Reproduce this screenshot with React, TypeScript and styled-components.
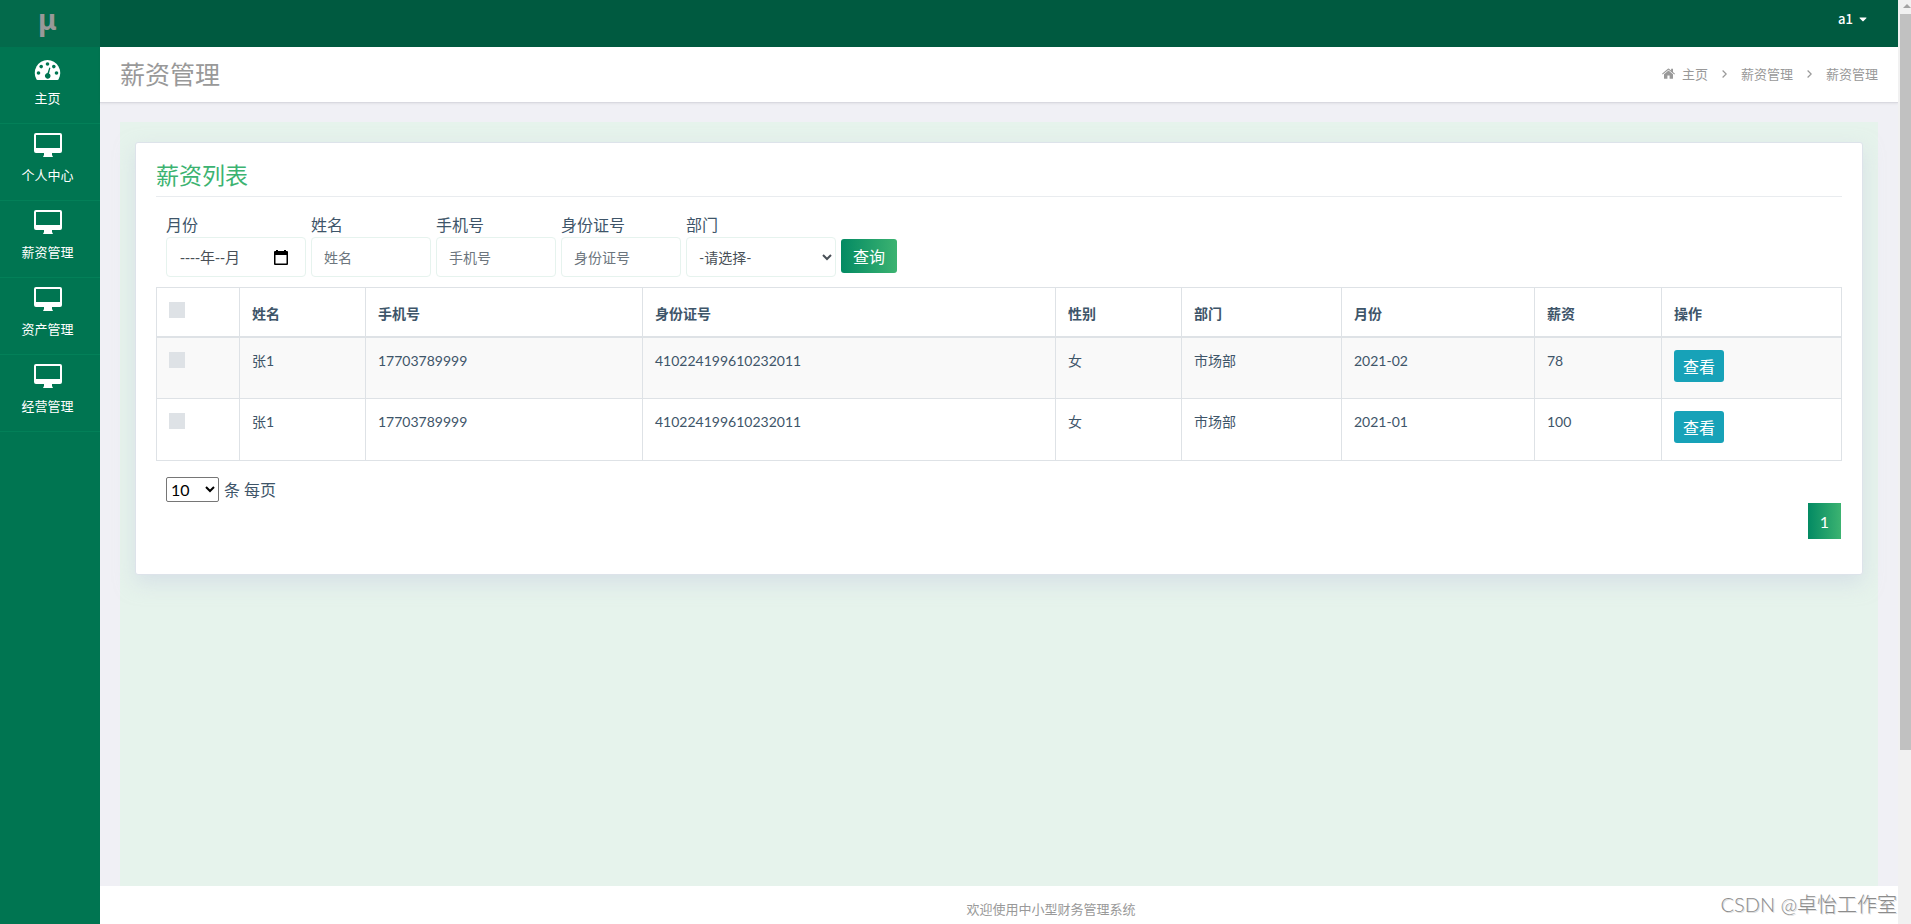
import React from "react";
import styled, { createGlobalStyle } from "styled-components";
import { FaCaretDown } from "react-icons/fa";

const sans = `Lato, "Noto Sans CJK SC", sans-serif`;

const GlobalStyle = createGlobalStyle`
  *, *::before, *::after { box-sizing: border-box; }
  html, body, #root { height: 100%; }
  body {
    margin: 0;
    overflow: hidden;
    background: #f0f0f5;
    color: #3e5569;
    font: 14px/21px ${sans};
  }
  button, input, select { font-family: inherit; }
  a { color: inherit; text-decoration: none; }
`;

const Shell = styled.div`
  display: flex;
  height: 100vh;
`;

const Sidebar = styled.nav`
  flex: 0 0 100px;
  background: #007551;
  color: #fff;
`;

const Brand = styled.a`
  display: block;
  height: 47px;
  padding: 0 5px 0 0;
  background: #036a4b;
  color: #999;
  font: bold 28px/38px "Noto Sans", sans-serif;
  text-align: center;
`;

const NavItem = styled.a`
  display: flex;
  flex-direction: column;
  align-items: center;
  justify-content: space-between;
  height: 77px;
  padding: 9px 5px 15px 0;
  border-bottom: 1px solid #038058;
  font-size: 13px;
  line-height: 20px;
`;

const Main = styled.div`
  flex: 1;
  min-width: 0;
  display: flex;
  flex-direction: column;
`;

const TopBar = styled.header`
  flex: 0 0 47px;
  display: flex;
  justify-content: flex-end;
  align-items: flex-start;
  padding: 9px 29px;
  background: #005a40;
`;

const UserButton = styled.button`
  display: flex;
  align-items: center;
  gap: 4px;
  padding: 0;
  border: 0;
  background: none;
  color: #fff;
  font: 500 13px/20px "Noto Sans CJK SC", sans-serif;
`;

const PageHeader = styled.div`
  flex: 0 0 56px;
  display: flex;
  align-items: center;
  justify-content: space-between;
  padding: 0 20px 2px;
  background: #fff;
  border-bottom: 1px solid #d9d9e0;
  box-shadow: 0 1px 2px rgba(0, 0, 0, 0.06);
  color: #999;
`;

const PageTitle = styled.h1`
  margin: 0;
  font-size: 25px;
  font-weight: normal;
  line-height: 36px;
`;

const Crumbs = styled.nav`
  display: flex;
  align-items: center;
  gap: 14px;
  font-size: 13px;
  line-height: 20px;

  a {
    display: flex;
    align-items: center;
    gap: 7px;
  }
`;

const Content = styled.main`
  flex: 1;
  min-height: 0;
  padding: 19px 20px 0;
`;

const Canvas = styled.div`
  height: 100%;
  padding: 20px 15px 0;
  background: #e6f3ec;
`;

const Card = styled.section`
  padding: 16px 20px 35px;
  border: 1px solid #dde3ea;
  border-radius: 3px;
  background: #fff;
  box-shadow: 0 8px 20px rgba(200, 208, 225, 0.5);
`;

const CardTitle = styled.h2`
  margin: 0 0 16px;
  padding-bottom: 4px;
  border-bottom: 1px solid #e9ecef;
  color: #3cb371;
  font-size: 23px;
  font-weight: normal;
  line-height: 33px;
`;

const SearchForm = styled.form`
  display: flex;
  align-items: flex-start;
  gap: 5px;
  height: 74px;
  padding-left: 10px;
`;

const Field = styled.label<{ $width: number }>`
  display: flex;
  flex-direction: column;
  width: ${(p) => p.$width}px;
  font-size: 16px;
  line-height: 24px;
`;

const control = `
  width: 100%;
  height: 40px;
  padding: 0 12px;
  border: 1px solid #e6f3ee;
  border-radius: 4px;
  background: #fff;
  color: #495057;
  font-size: 14px;
`;

const TextInput = styled.input`
  ${control}
  &::placeholder { color: #6c757d; opacity: 1; }
`;

const MonthBox = styled.span`
  display: flex;
  align-items: center;
  ${control}
  padding: 0 17px 0 13px;

  input {
    flex: 1;
    min-width: 0;
    padding: 0;
    border: 0;
    outline: 0;
    color: inherit;
    font-family: "Liberation Sans", "Noto Sans CJK SC", sans-serif;
    font-size: 15px;
  }
  input::placeholder { color: inherit; opacity: 1; }
`;

const DepartmentSelect = styled.select`
  ${control}
  padding: 0 0 0 8px;
`;

const SearchButton = styled.button`
  width: 56px;
  height: 34px;
  margin-top: 26px;
  padding: 0;
  border: 0;
  border-radius: 3px;
  background: linear-gradient(to right, #038a63, #3cb371);
  color: #fff;
  font-size: 16px;
`;

const DataTable = styled.table`
  width: 100%;
  table-layout: fixed;
  border-collapse: collapse;

  th, td {
    padding: 12px;
    border: 1px solid #dee2e6;
    text-align: left;
    vertical-align: top;
  }
  th {
    height: 49px;
    border-bottom-width: 2px;
    vertical-align: bottom;
  }
  th:first-child { vertical-align: top; }
  td { height: 62px; }
  tbody tr:nth-child(odd) { background: #f9f9f9; }
`;

const Tick = styled.input.attrs({ type: "checkbox" })`
  appearance: none;
  display: block;
  width: 16px;
  height: 16px;
  margin: 2px 0 0;
  background: #dee2e6;
`;

const ViewButton = styled.button`
  display: block;
  width: 50px;
  height: 32px;
  padding: 0;
  border: 0;
  border-radius: 3px;
  background: #17a2b8;
  color: #fff;
  font-size: 16px;
`;

const PageSize = styled.label`
  display: flex;
  align-items: center;
  gap: 5px;
  padding: 16px 0 0 10px;
  font-size: 16px;
  line-height: 25px;

  select {
    width: 53px;
    height: 25px;
    padding: 0;
    border: 1px solid #767676;
    border-radius: 2px;
    background: #fff;
    color: #000;
    font-size: 16px;
  }
`;

const Pager = styled.div`
  display: flex;
  justify-content: flex-end;
  padding: 1px 1px 0 0;
`;

const PageButton = styled.button`
  width: 33px;
  height: 36px;
  border: 0;
  padding: 0;
  background: linear-gradient(to right, #038a63, #3cb371);
  color: #fff;
  font-size: 16px;
`;

const Footer = styled.footer`
  position: relative;
  flex: 0 0 38px;
  padding: 13px 0 0 104px;
  background: #fff;
  color: #999;
  font-size: 13px;
  line-height: 20px;
  text-align: center;
`;

const Watermark = styled.span`
  position: absolute;
  right: 1px;
  bottom: 5px;
  color: #8c8c8c;
  font: 300 20px/30px ${sans};
  text-shadow: 1px 1px 0 #ddd;
`;

const ScrollTrack = styled.div`
  flex: 0 0 13px;
  display: flex;
  flex-direction: column;
  padding: 4px 0 0 2px;
  background: #f1f1f1;

  svg { display: block; margin-left: 3px; }
`;

const ScrollThumb = styled.div`
  height: 80%;
  margin-top: 6px;
  background: #c1c1c1;
`;

const DashboardIcon = () => (
  <svg width="27" height="24" viewBox="0 -3 27 24" aria-hidden="true">
    <path fill="#fff" d="M13.5 1A13 13 0 0 0 2.4 20.3Q2.8 21 3.6 21H23.4Q24.2 21 24.6 20.3A13 13 0 0 0 13.5 1Z" />
    <g fill="#007551">
      <circle cx="4.5" cy="14" r="1.8" />
      <circle cx="7.2" cy="7.6" r="1.8" />
      <circle cx="13.5" cy="5" r="1.8" />
      <circle cx="19.8" cy="7.6" r="1.8" />
      <circle cx="22.5" cy="14" r="1.8" />
      <path d="M15.3 8.6L16.4 8.9L15 14.4A2.8 2.8 0 1 1 13.5 14.1Z" />
    </g>
  </svg>
);

const DesktopIcon = () => (
  <svg width="28" height="24" viewBox="0 0 28 24" aria-hidden="true">
    <path
      fill="#fff"
      fillRule="evenodd"
      d="M2 0H26Q28 0 28 2V18Q28 20 26 20H18V22L19 24H9L10 22V20H2Q0 20 0 18V2Q0 0 2 0ZM2 2V15H26V2Z"
    />
  </svg>
);

const HomeIcon = () => (
  <svg width="13" height="11" viewBox="0 0 13 11" aria-hidden="true" fill="#999">
    <path d="M6.5 2.6L11 6.3V10.2Q11 10.8 10.4 10.8H7.6V7.6H5.4V10.8H2.6Q2 10.8 2 10.2V6.3Z" />
    <path d="M0 5.7L5.9 0.7Q6.5 0.3 7.1 0.7L9.1 2.4V0.8H11V4L13 5.7L12.3 6.4L6.5 1.7L0.7 6.4Z" />
  </svg>
);

const Chevron = () => (
  <svg width="5" height="8" viewBox="0 0 5 8" aria-hidden="true">
    <path d="M0.6 0.5L4.2 4L0.6 7.5" fill="none" stroke="#999" strokeWidth="1.2" />
  </svg>
);

const CalendarIcon = () => (
  <svg width="14" height="15" viewBox="0 0 14 15" aria-hidden="true">
    <path
      fill="#000"
      fillRule="evenodd"
      d="M2 0H4V1H10V0H12V1H13Q14 1 14 2V14Q14 15 13 15H1Q0 15 0 14V2Q0 1 1 1H2ZM1.5 5V13.5H12.5V5Z"
    />
  </svg>
);

const navItems = ["主页", "个人中心", "薪资管理", "资产管理", "经营管理"];
const textFields = ["姓名", "手机号", "身份证号"];
const columns = [
  { label: "姓名", width: 126 },
  { label: "手机号", width: 277 },
  { label: "身份证号", width: 413 },
  { label: "性别", width: 126 },
  { label: "部门", width: 160 },
  { label: "月份", width: 193 },
  { label: "薪资", width: 127 },
  { label: "操作", width: 180 },
];
const rows = [
  ["张1", "17703789999", "410224199610232011", "女", "市场部", "2021-02", "78"],
  ["张1", "17703789999", "410224199610232011", "女", "市场部", "2021-01", "100"],
];

export default function App() {
  return (
    <>
      <GlobalStyle />
      <Shell>
        <Sidebar>
          <Brand href="#">μ</Brand>
          {navItems.map((label, i) => (
            <NavItem href="#" key={label}>
              {i === 0 ? <DashboardIcon /> : <DesktopIcon />}
              {label}
            </NavItem>
          ))}
        </Sidebar>
        <Main>
          <TopBar>
            <UserButton>
              a1 <FaCaretDown size={12} />
            </UserButton>
          </TopBar>
          <PageHeader>
            <PageTitle>薪资管理</PageTitle>
            <Crumbs>
              <a href="#"><HomeIcon />主页</a>
              <Chevron />
              <a href="#">薪资管理</a>
              <Chevron />
              <span>薪资管理</span>
            </Crumbs>
          </PageHeader>
          <Content>
            <Canvas>
              <Card>
                <CardTitle>薪资列表</CardTitle>
                <SearchForm onSubmit={(e) => e.preventDefault()}>
                  <Field $width={140}>
                    月份
                    <MonthBox>
                      <input placeholder="----年--月" />
                      <CalendarIcon />
                    </MonthBox>
                  </Field>
                  {textFields.map((label) => (
                    <Field $width={120} key={label}>
                      {label}
                      <TextInput placeholder={label} />
                    </Field>
                  ))}
                  <Field $width={150}>
                    部门
                    <DepartmentSelect>
                      <option>-请选择-</option>
                    </DepartmentSelect>
                  </Field>
                  <SearchButton>查询</SearchButton>
                </SearchForm>
                <DataTable>
                  <colgroup>
                    <col width={83} />
                    {columns.map((c) => <col width={c.width} key={c.label} />)}
                  </colgroup>
                  <thead>
                    <tr>
                      <th><Tick aria-label="全选" /></th>
                      {columns.map((c) => <th key={c.label}>{c.label}</th>)}
                    </tr>
                  </thead>
                  <tbody>
                    {rows.map((row) => (
                      <tr key={row[5]}>
                        <td><Tick aria-label={row[5]} /></td>
                        {row.map((cell, i) => <td key={i}>{cell}</td>)}
                        <td><ViewButton>查看</ViewButton></td>
                      </tr>
                    ))}
                  </tbody>
                </DataTable>
                <PageSize>
                  <select>
                    <option>10</option>
                  </select>
                  条 每页
                </PageSize>
                <Pager>
                  <PageButton>1</PageButton>
                </Pager>
              </Card>
            </Canvas>
          </Content>
          <Footer>
            欢迎使用中小型财务管理系统
            <Watermark>CSDN @卓怡工作室</Watermark>
          </Footer>
        </Main>
        <ScrollTrack aria-hidden="true">
          <svg width="8" height="4" viewBox="0 0 8 4">
            <path d="M4 0L8 4H0Z" fill="#a3a3a3" />
          </svg>
          <ScrollThumb />
        </ScrollTrack>
      </Shell>
    </>
  );
}
